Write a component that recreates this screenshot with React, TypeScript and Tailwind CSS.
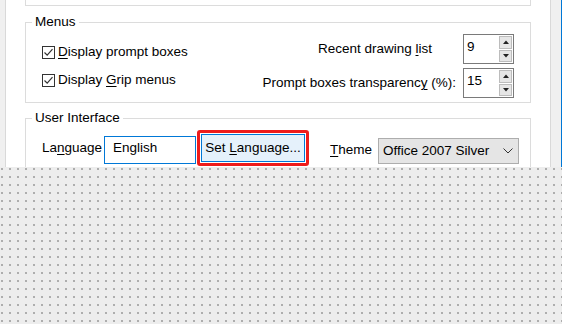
import type { ReactNode } from "react"

function Key({ children }: { children: ReactNode }) {
  return <span className="underline underline-offset-2 decoration-1">{children}</span>
}

function CheckBox() {
  return (
    <span className="flex h-[13px] w-[13px] shrink-0 items-center justify-center border border-[#333] bg-white">
      <svg width="11" height="11" viewBox="0 0 11 11">
        <path d="M1.5 5.5 L4.2 8.2 L9.5 2.2" fill="none" stroke="#333" strokeWidth="1.2" />
      </svg>
    </span>
  )
}

function Spinner({ value }: { value: string }) {
  return (
    <div className="flex h-[30px] w-[51px] shrink-0 border border-[#7a7a7a] bg-white">
      <span className="flex-1 pl-[3px] pt-[3px] leading-[18px]">{value}</span>
      <div className="flex w-[14px] flex-col gap-[1px] py-[1px] pr-[1px]">
        <div className="flex flex-1 items-center justify-center border border-[#bcbcbc] bg-[#e6e6e6]">
          <svg width="6" height="4" viewBox="0 0 6 4"><path d="M0 4 L3 0.5 L6 4 Z" fill="#222" /></svg>
        </div>
        <div className="flex flex-1 items-center justify-center border border-[#bcbcbc] bg-[#e6e6e6]">
          <svg width="6" height="4" viewBox="0 0 6 4"><path d="M0 0 L3 3.5 L6 0 Z" fill="#222" /></svg>
        </div>
      </div>
    </div>
  )
}

export default function App() {
  return (
    <div className="flex h-[324px] w-[562px] flex-col overflow-hidden font-['Liberation_Sans',Arial,sans-serif] text-[13.5px] text-black">
      <div className="flex h-[167px] shrink-0 overflow-hidden bg-white">
        <div className="w-[5px] shrink-0 bg-[#f0f0f0]" />
        <div className="flex min-w-0 flex-1 flex-col border-x border-[#d9d9d9] pl-[19px] pr-[19px]">
          <div className="h-[6px] shrink-0 border-x border-b border-[#dcdcdc]" />

          <fieldset className="mt-[7px] min-w-0 border border-[#dcdcdc] pb-[4px] pl-[16px] pr-[16px]">
            <legend className="ml-[-10px] px-[3px] leading-[18px]">Menus</legend>
            <div className="flex justify-between">
              <div className="flex flex-col gap-[10px] pt-[12px]">
                <label className="flex h-[18px] items-center gap-[3px]">
                  <CheckBox />
                  <span><Key>D</Key>isplay prompt boxes</span>
                </label>
                <label className="flex h-[18px] items-center gap-[3px]">
                  <CheckBox />
                  <span>Display <Key>G</Key>rip menus</span>
                </label>
              </div>
              <div className="flex flex-col gap-[4px] pt-[3px]">
                <div className="flex items-center justify-end gap-[31px]">
                  <span>Recent drawing <Key>l</Key>ist</span>
                  <Spinner value="9" />
                </div>
                <div className="flex items-center justify-end gap-[7px]">
                  <span>Prompt boxes transparenc<Key>y</Key> (%):</span>
                  <Spinner value="15" />
                </div>
              </div>
            </div>
          </fieldset>

          <fieldset className="mt-[6px] min-w-0 border border-[#dcdcdc] pb-[10px] pl-[16px] pr-[12px]">
            <legend className="ml-[-10px] px-[3px] leading-[18px]">User Interface</legend>
            <div className="flex items-start pt-[3px]">
              <span className="mt-[9px] w-[62px] shrink-0 leading-[18px]">La<Key>n</Key>guage</span>
              <div className="mt-[6px] flex h-[28px] w-[92px] shrink-0 items-start border border-[#0078d7] bg-white pl-[8px] pt-[2px] leading-[18px]">
                English
              </div>
              <div className="ml-[1px] shrink-0 rounded-[3px] border-[3px] border-[#ee1c1c] p-[1px]">
                <div className="flex h-[28px] w-[104px] items-center justify-center border border-[#0078d7] bg-[#e5f1fb] leading-[18px]">
                  <span>Set <Key>L</Key>anguage...</span>
                </div>
              </div>
              <span className="ml-[21px] mt-[11px] w-[48px] shrink-0 leading-[18px]"><Key>T</Key>heme</span>
              <div className="mt-[8px] flex h-[26px] w-[141px] shrink-0 items-center justify-between border border-[#adadad] bg-[#e5e5e5] pl-[4px] pr-[5px] leading-[18px]">
                <span>Office 2007 Silver</span>
                <svg width="10" height="6" viewBox="0 0 10 6">
                  <path d="M0.5 0.5 L5 5 L9.5 0.5" fill="none" stroke="#333" strokeWidth="1" />
                </svg>
              </div>
            </div>
          </fieldset>
        </div>
        <div className="w-[10px] shrink-0 bg-[#f0f0f0]" />
        <div className="w-[1px] shrink-0 bg-[#0078d7]" />
      </div>
      <div className="flex-1 bg-[#ededed] bg-[radial-gradient(circle,#9c9c9c_0.6px,transparent_1.1px)] bg-[length:8px_8px] bg-[position:-2px_-2px]" />
    </div>
  )
}
